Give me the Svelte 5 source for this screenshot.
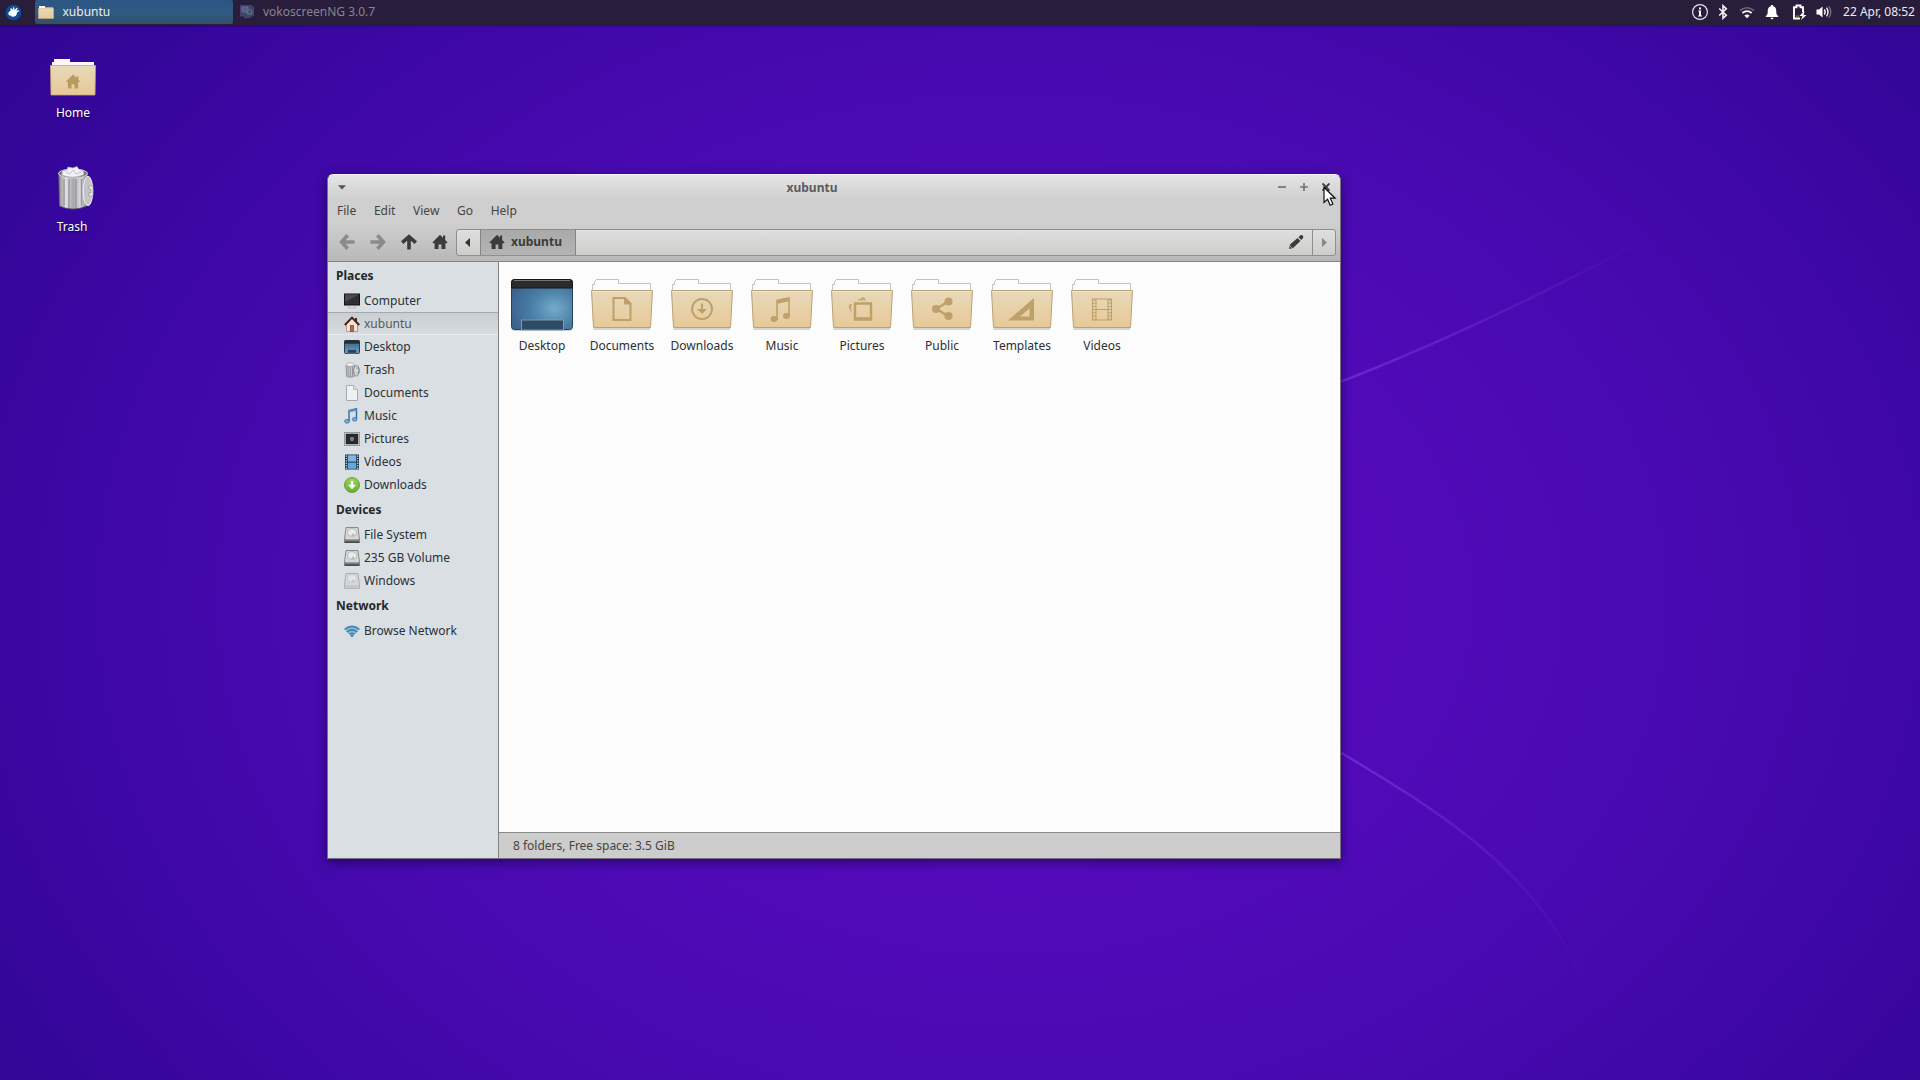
<script>
  const places = [
    ['computer', 'Computer'], ['house', 'xubuntu'], ['desk', 'Desktop'], ['bin', 'Trash'],
    ['doc', 'Documents'], ['note', 'Music'], ['photo', 'Pictures'], ['film', 'Videos'], ['down', 'Downloads'],
  ];
  const groups = [
    { title: 'Places', items: places },
    { title: 'Devices', items: [['drive', 'File System'], ['drive', '235 GB Volume'], ['driveoff', 'Windows']] },
    { title: 'Network', items: [['net', 'Browse Network']] },
  ];
  const folders = ['Desktop', 'Documents', 'Downloads', 'Music', 'Pictures', 'Public', 'Templates', 'Videos'];
  const menus = ['File', 'Edit', 'View', 'Go', 'Help'];
</script>

{#snippet homeGlyph()}
  <svg class="g16" viewBox="0 0 16 16"><path fill="currentColor" d="M8 .8 0.4 8.4l.9.9H2.6V15H6.6V10.4H9.4V15H13.4V9.3H14.7l.9-.9L13.2 6V1.4H11V3.8Z" /></svg>
{/snippet}

{#snippet arrow(dir)}
  <svg class="g16 {dir}" viewBox="0 0 16 16"><path fill="none" stroke="currentColor" stroke-width="3.6" d="M8.6 1.2 2.6 8l6 6.8M3 8h12.6" /></svg>
{/snippet}

{#snippet side(name)}
  <svg class="g16" viewBox="0 0 16 16">
    {#if name === 'computer'}
      <rect x=".5" y="1" width="15" height="11" fill="#303034" stroke="#111" />
      <path d="M1 1.500h14L1 9z" fill="#4c4c52" />
      <path d="M5.5 13h5l1 2h-7z" fill="#eee" stroke="#999" stroke-width=".6" />
    {:else if name === 'house'}
      <path d="M2.5 8 8 2.5 13.5 8v7.5h-11z" fill="#f8e2d6" stroke="#a87c70" stroke-width=".7" />
      <rect x="6.3" y="9.5" width="3.2" height="6" fill="#b06a4e" stroke="#6d3a28" stroke-width=".6" />
      <path d="M.8 9 8 1.7 15.2 9M12 2v3" fill="none" stroke="#4a1f1c" stroke-width="1.9" />
    {:else if name === 'desk'}
      <rect x=".5" y="1.5" width="15" height="13" rx="1" fill="url(#desk)" stroke="#223a50" />
      <path d="M.5 1.5h15v3.2H.5z" fill="#262b30" />
      <rect x="3.5" y="10.5" width="9" height="3.7" fill="#26425e" stroke="#6b90ab" stroke-width=".7" />
    {:else if name === 'bin'}
      <path d="M2 3.5h8.5l-.3 11Q6 16 2.6 14.5z" fill="#c9c9cb" stroke="#858589" stroke-width=".8" />
      <path d="M4 4v10M6.3 4v11M8.5 4v10" stroke="#88888c" stroke-width=".8" />
      <ellipse cx="6.2" cy="2.6" rx="4" ry="1.8" fill="#f3f3f5" stroke="#999" stroke-width=".7" />
      <ellipse cx="12.4" cy="8.8" rx="2.6" ry="5.2" fill="#dcdcde" stroke="#77777c" stroke-width=".9" />
      <path d="M12 6h3v5h-3" fill="none" stroke="#88888c" stroke-width=".8" />
    {:else if name === 'doc'}
      <path d="M2.5.5h7l4 4v11h-11z" fill="#f0f1f2" stroke="#a9adb0" />
      <path d="M9.5.5v4h4" fill="#d5d8da" stroke="#a9adb0" stroke-width=".7" />
    {:else if name === 'note'}
      <path d="M5 13.2V2.5l7.5-1.8v10.5" fill="none" stroke="#2f6ba0" stroke-width="1.4" />
      <path d="M5 3.5 12.5 1.8" stroke="#5b99cc" stroke-width="2.2" />
      <ellipse cx="3" cy="13.3" rx="2.4" ry="1.9" fill="#73afdb" stroke="#2f6ba0" stroke-width=".7" />
      <ellipse cx="10.6" cy="11.3" rx="2.3" ry="1.9" fill="#73afdb" stroke="#2f6ba0" stroke-width=".7" />
    {:else if name === 'photo'}
      <rect x=".5" y="1.5" width="15" height="13" fill="#eee" stroke="#96999b" />
      <rect x="2" y="3" width="12" height="10" fill="#282b2e" stroke="#111" stroke-width=".6" />
      <circle cx="8" cy="8" r="1.9" fill="#9aa0a4" /><circle cx="8" cy="8" r=".7" fill="#333" />
    {:else if name === 'film'}
      <rect x="1" y=".5" width="14" height="15" fill="#22384c" />
      <rect x="3.8" y="1.3" width="8.4" height="6.3" fill="#7cb6e6" /><rect x="3.8" y="8.6" width="8.4" height="6.2" fill="#68a5db" />
      <path d="M2.3 1.5v13.500M13.7 1.5v13.500" stroke="#e3edf5" stroke-width="1.1" stroke-dasharray="1.2 1.2" />
    {:else if name === 'down'}
      <circle cx="8" cy="8" r="7.5" fill="url(#green)" stroke="#5c9e2c" stroke-width=".9" />
      <path d="M6.7 3.8h2.6v4h2.8L8 12.2 3.9 7.8h2.8z" fill="#fff" />
    {:else if name === 'drive' || name === 'driveoff'}
      <g opacity={name === 'driveoff' ? 0.6 : 1}>
        <path d="M2 .5h12l1.5 11.5v3.5H.5V12z" fill="#d3d5d6" stroke="#808385" stroke-width=".9" />
        <ellipse cx="8" cy="5.5" rx="4.6" ry="3.8" fill="#e9eaea" stroke="#aaacae" stroke-width=".7" />
        <path d="M7 8.5 9.5 6l1 3.5z" fill="#b7b9bb" />
        <path d="M.8 12h14.4v3.3H.8z" fill={name === 'drive' ? '#77797b' : '#b9bbbd'} />
        <path d="M1.500 12.6h13" stroke="#b0b2b4" stroke-width=".8" />
        {#if name === 'drive'}<path d="M.6 15.2h14.8" stroke="#333" stroke-width="1.1" />{/if}
      </g>
    {:else}
      <path d="M.3 6.200Q8-.2 15.700 6.200L8 14.500z" fill="#8fb9d8" />
      <g fill="none" stroke="#4084b6" stroke-width="1.600">
        <path d="M.7 6.300Q8 .4 15.300 6.300" /><path d="M3 8.800q5-3.800 10 0" /><path d="M5.300 11.200q2.700-2 5.400 0" />
      </g>
      <path d="M6.300 12.300q1.700-1 3.400 0L8 14.300z" fill="#34739f" />
    {/if}
  </svg>
{/snippet}

{#snippet folder(name)}
  <svg class="folder" viewBox="0 0 64 54">
    {#if name === 'Desktop'}
      <rect x="1.5" y="3" width="61" height="50" rx="3" fill="#000" opacity=".16" />
      <rect x="1.5" y="1.5" width="61" height="50" rx="3" fill="url(#screen)" stroke="#24425f" />
      <path d="M1.5 10V4.5a3 3 0 0 1 3-3h55a3 3 0 0 1 3 3V10z" fill="#2b2b2d" stroke="#161618" />
      <path d="M4 2.5h56" stroke="#77777a" />
      <rect x="11.5" y="42" width="42" height="10" fill="#2d4a66" stroke="#8199ac" />
    {:else}
      <path d="M3.5 51h56.5" stroke="#000" opacity=".15" stroke-width="2" />
      <path d="M2.5 14V6.5h2V3.5L6.500 1.500H28.500V5.500H60.500V14z" fill="#fdfdfd" stroke="#c4c2be" />
      <path d="M1.500 12.500H62.500L60.500 49.500H3.500z" fill="url(#tan)" stroke="#b8a278" />
      <path d="M2 13.500H62" stroke="#f5e6c6" />
      <g fill="none" stroke="#bda06a" stroke-width="2">
        {#if name === 'Documents'}
          <path d="M23.500 20h11.500l5.500 5.500v16.500H23.500z" /><path d="M34 19.500v7h7z" fill="#bda06a" stroke="none" />
        {:else if name === 'Downloads'}
          <circle cx="32" cy="31" r="10" stroke-width="1.900" /><path d="M32 25.500v8" /><path d="M27 31h10L32 36z" fill="#bda06a" stroke="none" />
        {:else if name === 'Music'}
          <path d="M27 42V22.500l12-2.500v18" stroke-width="1.600" /><path d="M27 24 39 21.500" stroke-width="3.500" />
          <ellipse cx="24" cy="41" rx="3.500" ry="2.900" fill="#bda06a" stroke="none" /><ellipse cx="36.500" cy="38" rx="3.500" ry="2.900" fill="#bda06a" stroke="none" />
        {:else if name === 'Pictures'}
          <path d="M25 25.500h16v15H25z" stroke-width="2.400" /><path d="M24 41.500h18" stroke-width="2.500" />
          <path d="M27.500 22.500 28 21h2.500q1-3 4-1.500l1.500 3z" fill="#bda06a" stroke="none" opacity=".8" /><path d="M22 26q-4 0-3 4l2.500 4.500-.5-5z" fill="#bda06a" stroke="none" opacity=".9" />
        {:else if name === 'Public'}
          <path d="M38 23.500 26.500 31 38 38" stroke-width="2.500" />
          <g fill="#bda06a" stroke="none"><circle cx="38.500" cy="23.500" r="4" /><circle cx="26" cy="31" r="4" /><circle cx="38.500" cy="38" r="4" /></g>
        {:else if name === 'Templates'}
          <path fill="#bda06a" stroke="none" fill-rule="evenodd" d="M44 20V42.500H18zM39.500 30.500v8H30z" />
        {:else}
          <path d="M22.500 21h19v21h-19zM26 21v21M38 21v21M26 31.500h12" stroke-width="1.100" />
          <path d="M24.200 21.500v20M39.800 21.500v20" stroke-width="3" stroke-dasharray="1 2.200" />
        {/if}
      </g>
    {/if}
  </svg>
{/snippet}

<svg class="defs" width="0" height="0">
  <defs>
    <linearGradient id="tan" x2="0" y2="1"><stop stop-color="#e8d9b9" /><stop offset="1" stop-color="#e7c998" /></linearGradient>
    <linearGradient id="desk" x2="0" y2="1"><stop stop-color="#34628a" /><stop offset="1" stop-color="#6d9fb8" /></linearGradient>
    <radialGradient id="screen" cx=".7" cy=".58" r=".75"><stop stop-color="#75abc9" /><stop offset=".5" stop-color="#4a7fa8" /><stop offset="1" stop-color="#3a628b" /></radialGradient>
    <linearGradient id="green" x2="0" y2="1"><stop stop-color="#9bd35c" /><stop offset="1" stop-color="#64ae35" /></linearGradient>
    <linearGradient id="metal"><stop stop-color="#8b8b8f" /><stop offset=".25" stop-color="#e4e4e6" /><stop offset=".5" stop-color="#a6a6a9" /><stop offset=".75" stop-color="#dadadc" /><stop offset="1" stop-color="#89898d" /></linearGradient>
    <linearGradient id="ray1" gradientUnits="userSpaceOnUse" x1="1340" y1="0" x2="1650" y2="0"><stop stop-color="#7a38d6" stop-opacity=".65" /><stop offset="1" stop-color="#7a38d6" stop-opacity="0" /></linearGradient>
    <linearGradient id="ray2" gradientUnits="userSpaceOnUse" x1="1340" y1="0" x2="1590" y2="0"><stop stop-color="#7a38d6" stop-opacity=".7" /><stop offset="1" stop-color="#7a38d6" stop-opacity="0" /></linearGradient>
  </defs>
</svg>

<div class="desktop">
  <svg class="rays" viewBox="0 0 1920 1080">
    <path d="M1335 384Q1480 328 1650 237" fill="none" stroke="url(#ray1)" stroke-width="2.500" />
    <path d="M1335 749C1440 812 1540 872 1584 985" fill="none" stroke="url(#ray2)" stroke-width="2.500" />
  </svg>

  <header class="panel">
    <svg class="logo" viewBox="0 0 18 18"><circle cx="9" cy="9" r="8.300" fill="#0d4a9a" /><path d="M3.500 10.500C3.500 8 5 7.500 6 7.300L5.500 4.800l1.300-.3L8 6.700 8.500 3.500l1.300.1L10 6.300 12.500 4l.9.800L12 7.300l2.500-1 .4 1L12.800 9c0 3-2 4.500-4.800 4.500-1.500 0-1.500-.8-2-1.200-1 0-2-.3-2.500-1.800z" fill="#fff" /></svg>
    <div class="task active">
      <svg class="tfold" viewBox="0 0 16 14"><path d="M1 5V1h6v1.500h8V5z" fill="#fff8ec" /><path d="M.4 3.500h15.200V13.500H.4z" fill="url(#tan)" stroke="#d4b47c" stroke-width=".5" /></svg>
      <span>xubuntu</span>
    </div>
    <div class="task dim">
      <svg class="tvoko" viewBox="0 0 16 16"><path d="M1 1h11l3 2v9l-3 .5V14H8l-2 1-1-2.500H1z" fill="#3f4468" /><path d="M3 3h6v5H3zM7 9h6" fill="#56598a" stroke="#6a7796" stroke-width=".8" /><circle cx="10.500" cy="8" r="2.500" fill="none" stroke="#557590" /></svg>
      <span>vokoscreenNG 3.0.7</span>
    </div>
    <div class="tray">
      <svg class="info" viewBox="0 0 18 18"><circle cx="9" cy="9" r="7.400" fill="none" stroke="#e6e2ea" stroke-width="1.200" /><path d="M8 4.500h2v2H8zM7.300 7.500H10V12.500h1v1H7.200v-1H8v-4h-.7z" fill="#fff" /></svg>
      <svg class="bt" viewBox="0 0 10 16"><path d="M1.200 4.500 8.300 11.200 5 14.300V1.700L8.300 4.800 1.200 11.500" fill="none" stroke="#f2eff5" stroke-width="1.600" /></svg>
      <svg class="wf" viewBox="0 0 16 16"><g fill="none" stroke-width="1.700"><path d="M1 6.500q7-5.500 14 0" stroke="#6b6279" /><path d="M3.300 9q4.700-3.600 9.400 0" stroke="#fff" /></g><path d="M5.300 11.500q2.700-2 5.400 0L8 14.300z" fill="#fff" /></svg>
      <svg class="bell" viewBox="0 0 14 16"><path d="M7 1c.8 0 1.200.5 1.300 1.200C10.800 3 11.300 5 11.300 8c0 2 .6 3 1.900 4v1H.8v-1c1.300-1 1.900-2 1.900-4 0-3 .5-5 3-5.800C5.800 1.500 6.200 1 7 1zM5.500 13.700h3Q8.300 15.200 7 15.200T5.500 13.700z" fill="#fff" /></svg>
      <svg class="bat" viewBox="0 0 15 16"><path d="M8 14.500H2V3.200H4.500V1.500h4v1.700H11V8" fill="none" stroke="#fff" stroke-width="1.900" /><path d="M4 11.500h3v1.300H4z" fill="#8a7a35" /><path d="M11.500 7.500 7.500 12h3L9 16l5.500-5h-3l1-3.500z" fill="#fff" /></svg>
      <svg class="vol" viewBox="0 0 16 16"><path d="M.5 5.500H3L6.500 2.500v11L3 10.500H.5z" fill="#fff" /><g fill="none" stroke="#fff" stroke-width="1.300"><path d="M8.300 5.500q1.800 2.500 0 5" /><path d="M10.500 3.700q3 4.300 0 8.600" /><path d="M12.700 2q4.200 6 0 12" stroke="#7c7389" /></g></svg>
      <span class="clock">22 Apr, 08:52</span>
    </div>
  </header>

  <div class="shortcut home">
    <svg viewBox="0 0 46 38"><path d="M2 10V4h2V1h16v3h24v6z" fill="#fbf6fa" /><path d="M.5 7.500h45L45 37H1z" fill="url(#tan)" stroke="#c9a970" stroke-width=".8" /><path d="M23 16.500 15.700 24h2.200v6.500h3.600v-4.300h3v4.300h3.600V24h2.200l-2-2.300v-3.500h-1.800v1.700z" fill="#b59c5e" /></svg>
    <span>Home</span>
  </div>
  <div class="shortcut trash">
    <svg viewBox="0 0 36 44"><path d="M.8 7 1.500 40q13.500 6 27 0L29.500 7z" fill="url(#metal)" stroke="#66666a" stroke-width=".8" /><path d="M6 13v27M11 13v29M18 13v29M23.500 13v27" stroke="#97979c" stroke-width="1.400" /><ellipse cx="15" cy="7.500" rx="14.500" ry="4.500" fill="#77777b" stroke="#d5d5d9" /><path d="M4 9 4.500 5 9 4l1-3 5 1 4-1.500 2 3 4 1 1 4q-11 5-22.500.5z" fill="#eff1f7" stroke="#b6bac8" stroke-width=".7" /><path d="m8 6 4 2 3-4 3 4 5-2" fill="none" stroke="#bfc4d2" /><ellipse cx="30" cy="25" rx="4.800" ry="14.700" fill="#c5c5c8" stroke="#efeff1" /><path d="M31 20h4v10h-4v-3h2v-4h-2z" fill="#eee" stroke="#89898d" stroke-width=".6" /></svg>
    <span>Trash</span>
  </div>

  <main class="window">
    <div class="titlebar">
      <svg class="wmenu" viewBox="0 0 8 5"><path d="M0 .3h8L4 4.500z" fill="#555" /></svg>
      <strong>xubuntu</strong>
      <div class="wbtns">
        <svg viewBox="0 0 8 8"><path d="M0 4h8" stroke="#666" stroke-width="1.700" /></svg>
        <svg viewBox="0 0 8 8"><path d="M0 4h8M4 0v8" stroke="#777" stroke-width="1.700" /></svg>
        <svg viewBox="0 0 8 8"><path d="m.5.5 7 7m0-7-7 7" stroke="#3a3a3a" stroke-width="1.900" /></svg>
      </div>
    </div>
    <nav class="menubar">{#each menus as m}<span>{m}</span>{/each}</nav>
    <div class="toolbar">
      <div class="tb off">{@render arrow('left')}</div>
      <div class="tb off">{@render arrow('right')}</div>
      <div class="tb">{@render arrow('up')}</div>
      <div class="tb">{@render homeGlyph()}</div>
      <div class="pathbar">
        <div class="pleft"><svg viewBox="0 0 5 9"><path d="M5 0v9L0 4.500z" fill="#333" /></svg></div>
        <div class="crumb">{@render homeGlyph()}<strong>xubuntu</strong></div>
        <svg class="pencil" viewBox="0 0 16 16"><path d="m1 15 1-4.500L9.500 4l3 3L5 14zM10.400 3.200l2-1.900q1.500-.9 2.500.5t0 2.500l-1.600 1.700z" fill="#3c3c3c" /><path d="m2 11.800 1.900 2" stroke="#ddd" stroke-width=".8" /></svg>
        <div class="pright"><svg viewBox="0 0 5 9"><path d="M0 0v9l5-4.500z" fill="#888" /></svg></div>
      </div>
    </div>
    <div class="body">
      <aside>
        {#each groups as g}
          <h2>{g.title}</h2>
          {#each g.items as [icon, label]}
            <div class="row" class:sel={label === 'xubuntu'}>{@render side(icon)}<span>{label}</span></div>
          {/each}
        {/each}
      </aside>
      <section>
        <div class="grid">
          {#each folders as f}
            <div class="cell">{@render folder(f)}<span>{f}</span></div>
          {/each}
        </div>
        <footer>8 folders, Free space: 3.5 GiB</footer>
      </section>
    </div>
  </main>

  <svg class="cursor" viewBox="0 0 14 21"><path d="M1 1.200v15.300l3.600-3.300 2.600 6 2.700-1.200-2.600-5.800h4.900z" fill="#fff" stroke="#111" stroke-width="1.200" /></svg>
</div>

<style>
  :global(body) { margin: 0; overflow: hidden; }
  svg { display: block; flex: none; }
  .defs { position: absolute; }
  .desktop {
    position: relative; width: 1920px; height: 1080px; overflow: hidden;
    font: 12px/16px "Noto Sans", sans-serif; color: #2b3135;
    background: radial-gradient(ellipse 1300px 1000px at 1010px 600px, #5a0ac2 0%, #560abd 22%, #490ab1 50%, #3b07a3 75%, #2d058f 100%);
  }
  .rays { position: absolute; inset: 0; width: 1920px; height: 1080px; }
  .panel {
    position: relative; display: flex; align-items: flex-start; height: 25px; box-sizing: border-box;
    background: #281d3b; color: #eeeaf2; box-shadow: 0 1px 2px rgba(20, 5, 60, .4);
  }
  .logo { width: 17px; height: 17px; margin: 4px 13px 0 5px; }
  .task { display: flex; align-items: center; height: 24px; box-sizing: border-box; border-radius: 2px; }
  .active { width: 198px; padding-left: 3px; background: linear-gradient(#2c5683, #2f5a80 55%, #344f6b); }
  .tfold { width: 16px; height: 14px; margin-right: 8.500px; }
  .dim { color: #8b8494; padding-left: 6px; }
  .tvoko { width: 16px; height: 16px; margin-right: 8px; }
  .tray { display: flex; align-items: center; height: 24px; margin-left: auto; padding-right: 5px; }
  .info { width: 18px; height: 18px; margin-right: 8.500px; }
  .bt { width: 10px; height: 16px; margin-right: 11.500px; }
  .wf { width: 16px; height: 16px; margin-right: 10px; }
  .bell { width: 14px; height: 16px; margin-right: 13px; }
  .bat { width: 15px; height: 16px; margin-right: 9px; }
  .vol { width: 16px; height: 16px; margin-right: 11px; }
  .clock { white-space: nowrap; }

  .shortcut { position: absolute; display: flex; flex-direction: column; align-items: center; width: 80px; color: #fff; text-shadow: 0 1px 2px rgba(0, 0, 0, .7); }
  .home { left: 33px; top: 58px; }
  .home svg { width: 46px; height: 38px; margin-bottom: 9px; }
  .trash { left: 32px; top: 166px; }
  .trash svg { width: 36px; height: 44px; margin: 0 0 9px 8px; }

  .window {
    position: absolute; left: 327px; top: 174px; width: 1014px; height: 685px; box-sizing: border-box;
    display: flex; flex-direction: column; overflow: hidden; border: 1px solid #77717f; border-top-color: #f6f4f8;
    border-radius: 6px 6px 0 0; background: #cfcfcf; box-shadow: 0 3px 11px rgba(15, 0, 60, .6);
  }
  .titlebar { display: flex; align-items: center; height: 24px; background: linear-gradient(#e4e4e4, #d0d0d0); }
  .wmenu { width: 8px; height: 5px; margin-left: 10px; }
  .titlebar strong { flex: 1; text-align: center; color: #5b5b5b; padding-top: 1px; }
  .wbtns { display: flex; gap: 14px; padding-right: 10px; }
  .wbtns svg { width: 8px; height: 8px; }
  .menubar { display: flex; gap: 17.700px; align-items: center; height: 25px; box-sizing: border-box; padding: 0 0 1px 9px; color: #444; }
  .toolbar { display: flex; align-items: center; height: 38px; box-sizing: border-box; padding: 0 4px 1px 3px; background: linear-gradient(#cfcfcf, #b9b8b7); border-bottom: 1px solid #858585; }
  .tb { width: 31px; display: flex; justify-content: center; color: #3b3b3b; }
  .off { color: #8b8b8b; }
  .g16 { width: 16px; height: 16px; }
  .right { transform: rotate(180deg); }
  .up { transform: rotate(90deg); }
  .pathbar { display: flex; flex: 1; align-items: stretch; height: 27px; box-sizing: border-box; margin-left: 1px; border: 1px solid #8e8e8e; border-radius: 3px; background: linear-gradient(#dfdfdd, #cecdcb); }
  .pleft, .pright { width: 23px; box-sizing: border-box; display: flex; align-items: center; justify-content: center; }
  .pleft { padding-right: 2px; }
  .pleft svg, .pright svg { width: 5px; height: 9px; }
  .crumb { display: flex; align-items: center; width: 96px; box-sizing: border-box; padding-left: 8px; gap: 6px; border: solid #858585; border-width: 0 1px; background: linear-gradient(#a9a9a9, #b4b4b4); color: #3b3b3b; }
  .pencil { width: 16px; height: 16px; margin: auto 8px auto auto; }
  .pright { border-left: 1px solid #8e8e8e; }

  .body { display: flex; flex: 1; min-height: 0; }
  aside { width: 170px; border-right: 1px solid #7f8386; background: #dadfe3; }
  h2 { margin: 0; height: 27px; padding-left: 8px; font: bold 12px/27px "Noto Sans", sans-serif; color: #23282b; }
  .row { display: flex; align-items: center; gap: 4px; height: 23px; padding-left: 16px; }
  .sel { box-sizing: border-box; border-top: 1px solid #a7abaf; border-bottom: 1px solid #e9ecee; background: linear-gradient(#c9ced2, #d8dce0); color: #55595d; }
  section { flex: 1; display: flex; flex-direction: column; background: #fcfcfc; }
  .grid { display: flex; flex: 1; padding: 16px 0 0 3px; }
  .cell { display: flex; flex-direction: column; align-items: center; width: 80px; gap: 6px; }
  .folder { width: 64px; height: 54px; }
  .cell span { white-space: nowrap; }
  footer { height: 26px; box-sizing: border-box; padding: 5px 0 0 14px; border-top: 1px solid #898989; background: #cdcdcd; color: #444; }
  .cursor { position: absolute; left: 1323px; top: 186px; width: 14px; height: 21px; }
</style>
